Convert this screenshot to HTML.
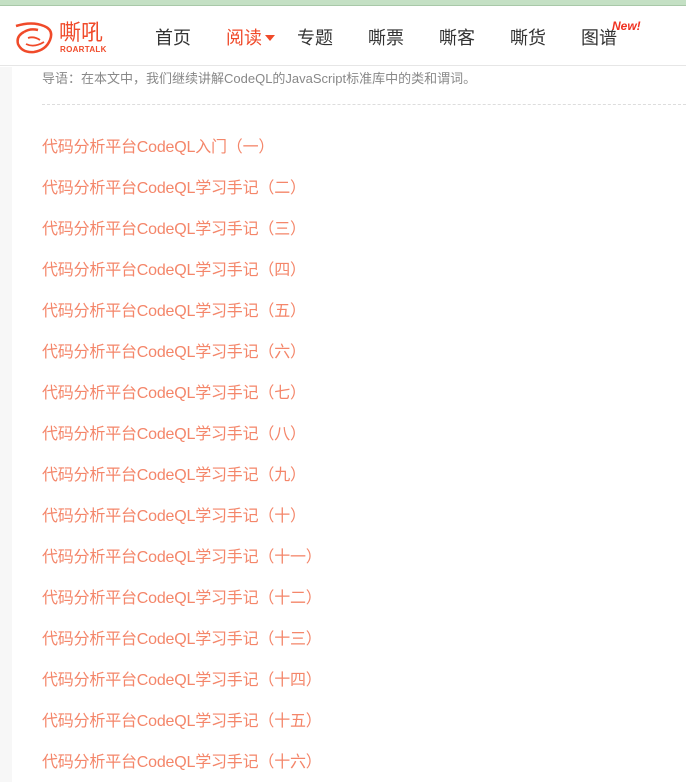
<!DOCTYPE html>
<html><head><meta charset="utf-8"><style>
*{margin:0;padding:0;box-sizing:border-box}
body{width:686px;height:782px;overflow:hidden;background:#fff;font-family:"Liberation Sans","Noto Sans CJK SC",sans-serif;position:relative}
.top{position:absolute;left:0;top:0;width:686px;height:6px;background:#c4e0c4;border-bottom:1px solid #a8c8a8}
.hdr{position:absolute;left:0;top:6px;width:686px;height:60px;border-bottom:1px solid #e6e6e6;background:#fff}
.nav{position:absolute;top:25px;font-size:18px;color:#333;font-family:"Noto Sans CJK SC",sans-serif;line-height:24px}
.strip{position:absolute;left:0;top:67px;width:12px;height:715px;background:#f7f7f7}
.intro{position:absolute;left:42px;top:68px;font-size:13px;color:#888}
.dash{position:absolute;left:42px;top:104px;width:644px;border-top:1px dashed #ddd}
.l{position:absolute;left:42px;font-size:16px;color:#f4866a;line-height:20px;white-space:nowrap;letter-spacing:-0.2px}
</style></head><body>
<div class="top"></div>
<div class="hdr">
<svg style="position:absolute;left:14px;top:16px" width="40" height="34" viewBox="0 0 40 34"><path d="M2 4 Q18 -1 30 4 Q40 8 36 18 Q32 28 20 30 Q8 31 4 22 Q2 14 10 10 M10 10 Q16 6 24 8" fill="none" stroke="#f04a2a" stroke-width="2.5"/><path d="M14 16 Q20 14 26 18 M12 22 Q20 26 30 20" fill="none" stroke="#f04a2a" stroke-width="1.8"/></svg>
<div style="position:absolute;left:59px;top:13px;font-size:22px;color:#f04a2a;font-family:'Noto Sans CJK SC',sans-serif;line-height:24px">嘶吼</div>
<div style="position:absolute;left:60px;top:39px;font-size:8px;font-weight:bold;color:#f04a2a;letter-spacing:.3px">ROARTALK</div>
</div>
<div class="nav" style="left:155px">首页</div>
<div class="nav" style="left:226px;color:#f04a2a">阅读</div>
<div style="position:absolute;left:265px;top:35px;width:0;height:0;border-left:5px solid transparent;border-right:5px solid transparent;border-top:6px solid #f04a2a"></div>
<div class="nav" style="left:297px">专题</div>
<div class="nav" style="left:368px">嘶票</div>
<div class="nav" style="left:439px">嘶客</div>
<div class="nav" style="left:510px">嘶货</div>
<div class="nav" style="left:581px">图谱</div>
<div style="position:absolute;left:612px;top:19px;font-size:12px;font-style:italic;font-weight:bold;color:#f03020">New!</div>
<div class="strip"></div>
<div class="intro">导语：在本文中，我们继续讲解CodeQL的JavaScript标准库中的类和谓词。</div>
<div class="dash"></div>
<div class="l" style="top:138px">代码分析平台CodeQL入门（一）</div>
<div class="l" style="top:179px">代码分析平台CodeQL学习手记（二）</div>
<div class="l" style="top:220px">代码分析平台CodeQL学习手记（三）</div>
<div class="l" style="top:261px">代码分析平台CodeQL学习手记（四）</div>
<div class="l" style="top:302px">代码分析平台CodeQL学习手记（五）</div>
<div class="l" style="top:343px">代码分析平台CodeQL学习手记（六）</div>
<div class="l" style="top:384px">代码分析平台CodeQL学习手记（七）</div>
<div class="l" style="top:425px">代码分析平台CodeQL学习手记（八）</div>
<div class="l" style="top:466px">代码分析平台CodeQL学习手记（九）</div>
<div class="l" style="top:507px">代码分析平台CodeQL学习手记（十）</div>
<div class="l" style="top:548px">代码分析平台CodeQL学习手记（十一）</div>
<div class="l" style="top:589px">代码分析平台CodeQL学习手记（十二）</div>
<div class="l" style="top:630px">代码分析平台CodeQL学习手记（十三）</div>
<div class="l" style="top:671px">代码分析平台CodeQL学习手记（十四）</div>
<div class="l" style="top:712px">代码分析平台CodeQL学习手记（十五）</div>
<div class="l" style="top:753px">代码分析平台CodeQL学习手记（十六）</div>
</body></html>
